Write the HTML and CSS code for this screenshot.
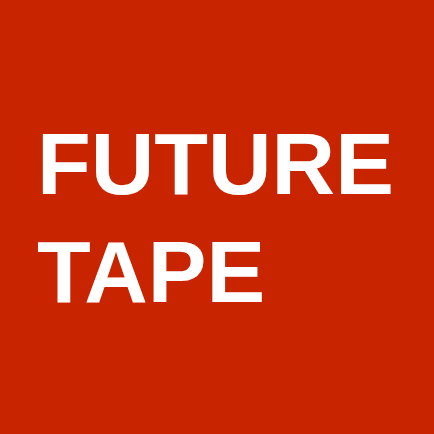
FILE: index.html
```html
<!DOCTYPE html>
<html lang="en">
<head>
    <meta charset="UTF-8">
    <meta name="viewport" content="width=device-width, initial-scale=1.0">
    <title>Future Tape</title>
    <link rel="stylesheet" href="styles.css">
</head>
<body>
    <div class="cover">
        <h1 class="title">FUTURE<br>TAPE</h1>
    </div>
</body>
</html>
```

FILE: styles.css
```css
* {
    margin: 0;
    padding: 0;
    box-sizing: border-box;
}

body {
    background: #c82400;
    font-family: 'Liberation Sans', Arial, sans-serif;
}

.cover {
    width: 434px;
    height: 434px;
    padding: 110px 0 0 37px;
}

.title {
    color: #fff;
    font-size: 88px;
    font-weight: bold;
    line-height: 108px;
}
```
